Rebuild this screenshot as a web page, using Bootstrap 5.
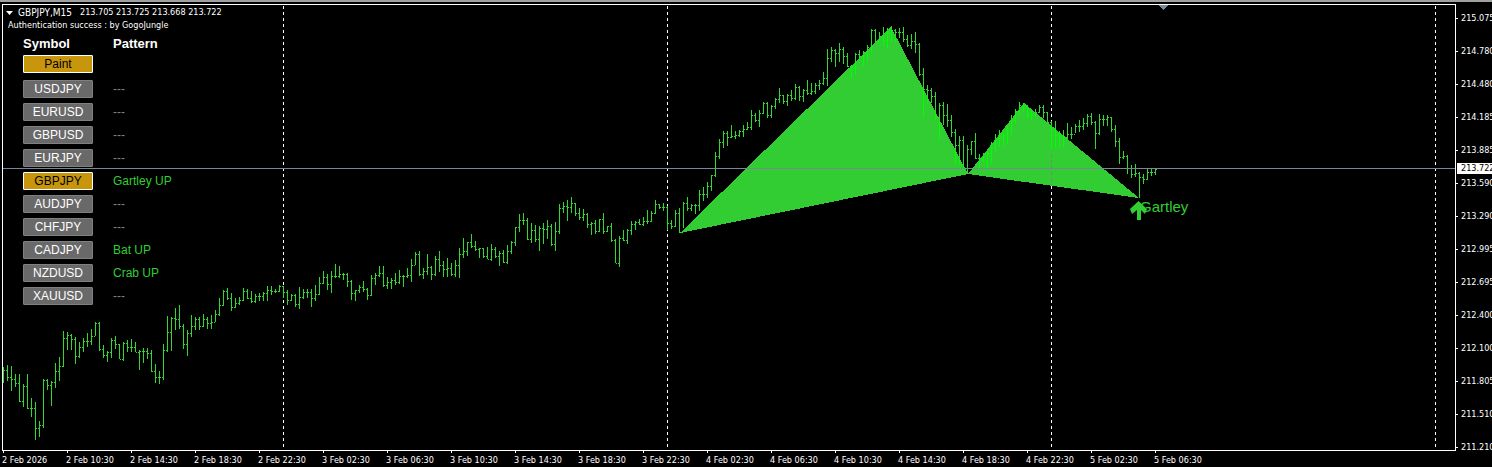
<!DOCTYPE html>
<html lang="en">
<head>
<meta charset="utf-8">
<meta name="viewport" content="width=device-width, initial-scale=1">
<title>GBPJPY,M15</title>
<link href="https://cdn.jsdelivr.net/npm/bootstrap@5.3.0/dist/css/bootstrap.min.css" rel="stylesheet">
<style>
  :root { --lime: #32cd32; --axis-font: "DejaVu Sans Condensed", "DejaVu Sans", sans-serif; }
  body { background: #000; color: #fff; font-family: "Liberation Sans", Arial, sans-serif; font-size: 12px; line-height: 14px; }
  .terminal { border-top: 2px solid #a0a0a0; min-height: 100vh; }
  .plot-column { min-width: 0; padding: 2px 0 0 2px; }
  .plot { border: 1px solid #fff; min-height: 447px; }
  .drawing { inset: 0; width: 100%; height: 100%; }
  .axis-text { font-family: var(--axis-font); font-size: 9px; line-height: 13px; }
  .time-axis { height: 16px; }
  .time-axis > span { flex: 0 0 64px; padding-top: 3px; background: linear-gradient(#fff, #fff) 1px 0 / 1px 2px no-repeat; }
  .price-axis { width: 36px; }
  .price-axis > span { flex: 0 0 33px; line-height: 33px; padding-left: 5px; background: linear-gradient(#fff, #fff) 0 16px / 2px 1px no-repeat; }
  .price-now { top: 161px; left: 1px; right: 0; height: 11px; line-height: 11px; padding-left: 4px; background: #fff; color: #000; }
  .titles { padding: 1px 0 0 5px; }
  .chart-name { width: 62px; font-size: 10px; }
  .caret { width: 7px; height: 4px; margin: 0 5px 0 -2px; }
  .scanner { margin: 5px 0 0 20px; }
  .scanner th, .scanner td { padding: 0; height: 23px; vertical-align: middle; }
  .scanner th { width: 90px; height: 14px; font-size: 13px; font-weight: 700; }
  .scanner .paint-row td { height: 26px; }
  .pair { display: block; width: 70px; height: 18px; padding: 0; font-size: 12px; line-height: 16px; color: #fff; background: #696969; border: 1px solid #808080; border-radius: 1px; }
  .pair:hover { color: #fff; background: #777; border-color: #999; }
  .pair-on, .pair-on:hover { color: #000; background: #c8960c; border-color: #fff; }
  .none { color: #808080; }
  .hit { color: var(--lime); }
  .signal-name { font-size: 15px; fill: var(--lime); }
</style>
</head>
<body>
<main class="terminal d-flex overflow-hidden">
  <div class="plot-column flex-grow-1 d-flex flex-column">
    <section class="plot position-relative flex-grow-1" aria-label="GBPJPY M15 chart">
      <svg class="drawing position-absolute" shape-rendering="crispEdges" aria-hidden="true">
        <defs>
          <clipPath id="patternArea"><path d="M677 228L888 22L965 169Z"/><path d="M965 169L1021 98L1136 193Z"/></clipPath>
        </defs>
        <g stroke="#fff" stroke-dasharray="3 3">
          <path d="M280.500 1V445M664.500 1V445M1048.500 1V445M1432.500 1V445"/>
        </g>
        <path id="bars" fill="#32d732"/>
        <path fill="#32cd32" d="M677 228L888 22L965 169L1021 98L1136 193L965 169Z"/>
        <g clip-path="url(#patternArea)">
          <path d="M1048.500 125V182" stroke="#808080" stroke-dasharray="3 3"/>
          <path id="barsOver" fill="#0f0"/>
        </g>
        <path d="M0 163.500H2000" stroke="#778899"/>
        <path d="M1155 0H1165L1160 5Z" fill="#778899"/>
        <text class="signal-name" x="1137" y="207">Gartley</text>
        <path d="M1135.500 196L1144 204L1142 209L1138 205V215H1134V205L1129 209L1127 204Z" fill="#32cd32" shape-rendering="auto"/>
      </svg>
      <div class="position-relative">
        <div class="titles axis-text">
          <div class="d-flex align-items-center"><svg class="caret" viewBox="0 0 7 4" aria-hidden="true"><path d="M0 0H7L3.500 4Z" fill="#fff"/></svg><span class="chart-name">GBPJPY,M15</span><span>213.705 213.725 213.668 213.722</span></div>
          <div>Authentication success : by GogoJungle</div>
        </div>
        <table class="scanner">
          <thead><tr><th scope="col">Symbol</th><th scope="col">Pattern</th></tr></thead>
          <tbody>
            <tr class="paint-row"><td><button type="button" class="btn pair pair-on">Paint</button></td><td></td></tr>
            <tr><td><button type="button" class="btn pair">USDJPY</button></td><td class="none">---</td></tr>
            <tr><td><button type="button" class="btn pair">EURUSD</button></td><td class="none">---</td></tr>
            <tr><td><button type="button" class="btn pair">GBPUSD</button></td><td class="none">---</td></tr>
            <tr><td><button type="button" class="btn pair">EURJPY</button></td><td class="none">---</td></tr>
            <tr><td><button type="button" class="btn pair pair-on">GBPJPY</button></td><td class="hit">Gartley UP</td></tr>
            <tr><td><button type="button" class="btn pair">AUDJPY</button></td><td class="none">---</td></tr>
            <tr><td><button type="button" class="btn pair">CHFJPY</button></td><td class="none">---</td></tr>
            <tr><td><button type="button" class="btn pair">CADJPY</button></td><td class="hit">Bat UP</td></tr>
            <tr><td><button type="button" class="btn pair">NZDUSD</button></td><td class="hit">Crab UP</td></tr>
            <tr><td><button type="button" class="btn pair">XAUUSD</button></td><td class="none">---</td></tr>
          </tbody>
        </table>
      </div>
    </section>
    <div class="time-axis axis-text d-flex text-nowrap">
      <span>2 Feb 2026</span><span>2 Feb 10:30</span><span>2 Feb 14:30</span><span>2 Feb 18:30</span><span>2 Feb 22:30</span><span>3 Feb 02:30</span><span>3 Feb 06:30</span><span>3 Feb 10:30</span><span>3 Feb 14:30</span><span>3 Feb 18:30</span><span>3 Feb 22:30</span><span>4 Feb 02:30</span><span>4 Feb 06:30</span><span>4 Feb 10:30</span><span>4 Feb 14:30</span><span>4 Feb 18:30</span><span>4 Feb 22:30</span><span>5 Feb 02:30</span><span>5 Feb 06:30</span>
    </div>
  </div>
  <aside class="price-axis axis-text position-relative d-flex flex-column flex-shrink-0" aria-label="Price">
    <span>215.075</span><span>214.780</span><span>214.480</span><span>214.185</span><span>213.885</span><span>213.590</span><span>213.290</span><span>212.995</span><span>212.695</span><span>212.400</span><span>212.100</span><span>211.805</span><span>211.510</span><span>211.210</span>
    <div class="price-now position-absolute">213.722</div>
  </aside>
</main>
<script src="https://cdn.jsdelivr.net/npm/bootstrap@5.3.0/dist/js/bootstrap.bundle.min.js"></script>
<script>
  // Each run: a top offset, then high,low,close triples in thirds of a pixel below it.
  const runs = [
    [285, "232,278,241 226,272,262 229,302,268 252,290,280 252,335,334 283,350,289 252,357,355 324,380,355 337,449,415 393,440,405 267,413,271 268,300,286 273,347,276 220,293,244 202,272,227 123,230,145 126,180,136 131,180,148 141,221,199 157,203,172 145,187,154 129,170,152 117,164,137 97,139,98 97,182,178 164,203,195 182,215,185 144,203,150 138,178,162 161,208,208 156,212,160 150,187,172 147,185,170 156,186,185 180,239,184 175,218,182 175,208,188 180,245,242 223,278,262 243,281,260 162,269,181 78,186,125 80,182,85 55,119,86 45,116,109 103,176,163 120,197,130 76,140,109 81,119,86 82,119,109 72,112,86 80,117,98 76,116,96"],
    [215, "270,306,283 234,288,256 210,258,212 204,240,235 219,273,262 234,264,249 231,255,240 204,243,213 207,237,233 213,249,244 222,249,229 219,243,229 216,243,218 198,243,210 198,225,213 207,219,214 195,216,199 198,234,216 210,255,241 222,243,225 222,261,252 201,267,232 207,237,216 207,234,216 207,261,233 195,243,223 171,225,188 153,192,171 162,210,193 153,219,168 132,174,168 138,174,163 159,180,161 159,201,184 180,240,220 210,243,211 195,219,200 183,216,207 204,240,226 165,229,175 159,195,165 138,171,160 138,201,196 171,207,185 174,207,181 159,195,187 150,192,168 165,201,169 144,174,164 117,186,134 96,135,102 93,168,161 144,177,152 102,165,140 138,180,162"],
    [175, "228,288,236 213,276,256 243,291,267 234,291,264 249,288,281 240,291,256 204,294,223 174,234,213 186,228,187 162,204,198 183,213,207 204,234,205 204,234,228 201,237,236 192,243,206 201,234,227 213,258,220 210,249,247 195,252,213 183,222,187 141,198,142 102,156,121 99,135,121 114,180,178 129,189,149 135,186,178 138,213,145 129,192,146 120,177,139 132,198,193 126,213,154 72,162,84 66,99,78 60,123,80 51,99,70 69,108,98 84,120,112 87,123,102 99,144,133 126,165,130 120,162,153 117,156,118 99,162,154 138,156,138 129,186,180 177,249,249 168,261,175 150,183,180 147,192,150 123,165,133 123,150,127 117,135,132 111,138,124 90,132,123 93,126,98 60,102,73 72,87,82 69,93,82 78,150,129 120,147,139 90,141,100 84,158,157"],
    [15, "546,624,550 531,573,564 552,573,556 552,582,554 510,573,521 501,543,522 486,534,499 465,513,466 396,471,409 357,417,366 333,384,339 333,378,351 315,354,348 333,357,345 330,351,333 315,351,326 306,330,322 270,330,286 279,306,301 270,321,280 246,282,249 246,294,284 255,294,259 234,267,238 204,249,226 225,252,244 222,258,224 210,243,235 192,240,200 198,243,229 207,246,211 180,225,219 189,225,214 189,222,196 180,210,190 156,195,175 87,198,115 81,126,90 87,141,100 69,126,86 81,132,107 99,141,138 135,177,140 99,165,102 90,120,108 93,138,96 75,126,82 27,96,30 27,66,63 36,60,47 21,78,60 24,84,40 18,66,30 27,66,36 24,54,36 21,66,58 45,81,76 42,87,63 36,99,72 69,168,163 144,291,207 195,255,210 204,249,228 216,300,290 249,360,255 246,315,286 252,321,299 285,351,337 327,435,375 348,435,361 348,450,445 375,462,388 363,405,364 339,417,413 402,444,418 400,426,424 396,447,400 366,432,380 342,396,355 330,380,350 340,378,345 318,372,330 285,345,300 267,310,272 246,285,255 248,275,258 255,294,285 270,300,282 267,291,275 255,279,261 255,294,276 276,309,306 303,390,330 303,384,345 333,384,350 330,381,350 309,357,341 321,357,343 312,339,318 300,336,319 294,330,308 282,321,288 279,315,307 303,387,340 282,345,297 285,318,298 285,318,291 291,336,327 315,381,363 354,432,410 393,417,408 405,462,444 435,474,462 432,471,459 456,534,472 462,492,478 447,480,456 447,468,456 444,465,447"]
  ];
  const bars = runs.flatMap(([top, list]) =>
    list.split(" ").map(bar => bar.split(",").map(v => top + Math.round(v / 3))));
  const box = (x, y, w, h) => `M${x} ${y}h${w}v${h}h${-w}z`;
  let path = "", open = null;
  bars.forEach(([high, low, close], i) => {
    const x = i * 4;
    path += box(x, high, 1, low - high) + box(x + 1, close, 1, 1);
    if (open !== null) path += box(x - 1, open, 1, 1);
    open = close;
  });
  document.getElementById("bars").setAttribute("d", path);
  document.getElementById("barsOver").setAttribute("d", path);
</script>
</body>
</html>
